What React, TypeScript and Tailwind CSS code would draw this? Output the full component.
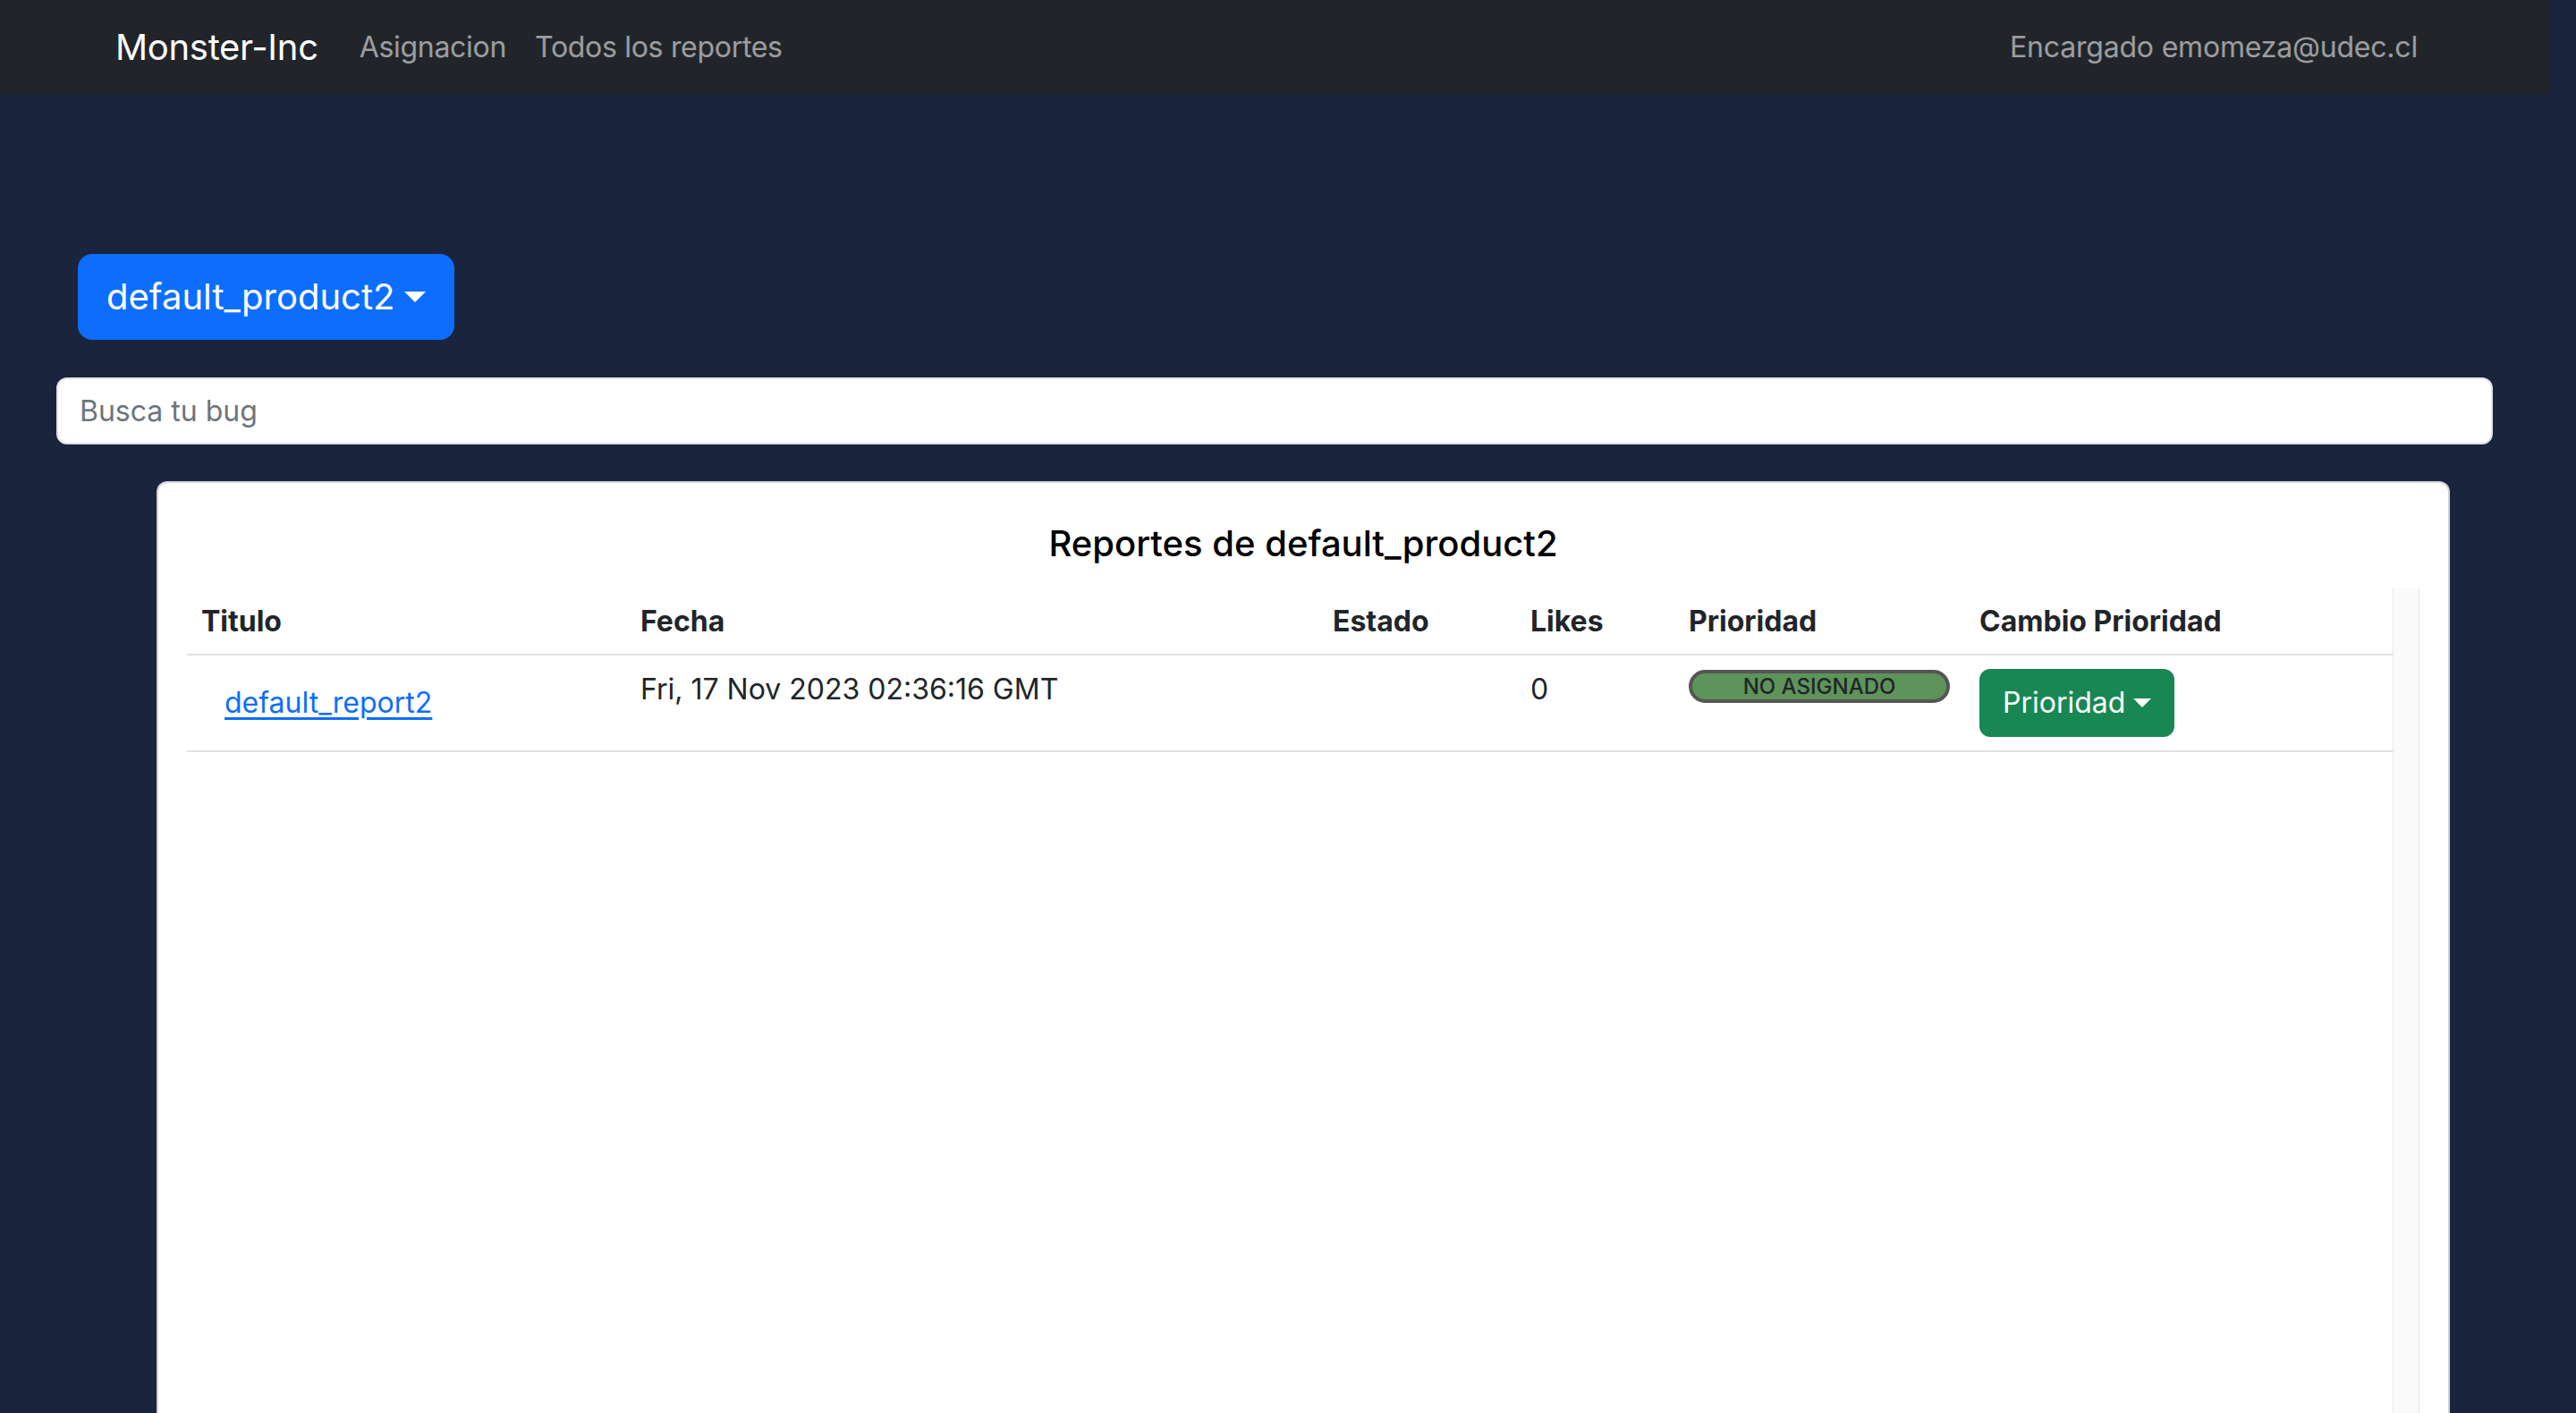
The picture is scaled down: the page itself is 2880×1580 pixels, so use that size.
import React from "react";

const rows = [
    {
        titulo: "default_report2",
        fecha: "Fri, 17 Nov 2023 02:36:16 GMT",
        estado: "",
        likes: 0,
        prioridad: "NO ASIGNADO",
    },
];

function Caret({ size }: { size: "lg" | "md" }) {
    return size === "lg" ? (
        <span className="ml-[11px] inline-block border-x-[12px] border-t-[12px] border-x-transparent border-t-white align-middle" />
    ) : (
        <span className="ml-[9px] inline-block border-x-[10px] border-t-[10px] border-x-transparent border-t-white align-middle" />
    );
}

export default function App() {
    return (
        <div
            className="flex h-[1580px] w-full flex-col overflow-hidden bg-[#1a243d] text-[#212529]"
            style={{ fontFamily: "Inter, 'Noto Sans', sans-serif" }}
        >
            {/* Navbar */}
            <nav className="flex h-[106px] w-[2850px] shrink-0 items-center bg-[#212529] pl-[129px] pr-[147px]">
                <span className="mr-[30px] text-[40px] leading-[60px] tracking-[-0.3px] text-white">Monster-Inc</span>
                <a className="px-[16px] text-[32px] leading-[48px] tracking-[-0.3px] text-white/55">Asignacion</a>
                <a className="px-[16px] text-[32px] leading-[48px] tracking-[-0.3px] text-white/55">Todos los reportes</a>
                <span className="ml-auto text-[32px] leading-[48px] tracking-[-0.2px] text-white/55">Encargado emomeza@udec.cl</span>
            </nav>

            <main className="flex min-h-0 flex-1 flex-col pl-[63px] pr-[93px]">
                {/* Product dropdown */}
                <div className="ml-[24px] mt-[178px]">
                    <button className="flex h-[96px] items-center rounded-[16px] bg-[#0d6efd] px-[32px] text-[40px] leading-[60px] text-white">
                        default_product2
                        <Caret size="lg" />
                    </button>
                </div>

                {/* Search */}
                <input
                    className="mt-[42px] h-[75px] w-full rounded-[12px] border-2 border-[#dee2e6] bg-white px-[24px] text-[32px] text-[#212529] placeholder:text-[#6c757d] outline-none"
                    placeholder="Busca tu bug"
                />

                {/* Reports card */}
                <section className="ml-[112px] mr-[48px] mt-[41px] flex min-h-0 flex-1 flex-col rounded-t-[12px] border-2 border-b-0 border-[#d3d3d3] bg-white px-[32px] pt-[38px]">
                    <h2 className="text-center text-[40px] font-medium leading-[60px] text-black">
                        Reportes de default_product2
                    </h2>

                    <div className="mt-[20px] flex min-h-0 flex-1">
                        <div className="flex-1">
                            <table className="w-full table-fixed border-collapse">
                                <colgroup>
                                    <col className="w-[491px]" />
                                    <col className="w-[774px]" />
                                    <col className="w-[221px]" />
                                    <col className="w-[177px]" />
                                    <col className="w-[325px]" />
                                    <col />
                                </colgroup>
                                <thead>
                                    <tr className="h-[74px] border-b-2 border-[#dee2e6] text-left text-[32px] font-bold">
                                        <th className="px-[16px] align-middle">Titulo</th>
                                        <th className="px-[16px] align-middle">Fecha</th>
                                        <th className="px-[16px] align-middle">Estado</th>
                                        <th className="px-[16px] align-middle">Likes</th>
                                        <th className="px-[16px] align-middle">Prioridad</th>
                                        <th className="px-[16px] align-middle">Cambio Prioridad</th>
                                    </tr>
                                </thead>
                                <tbody>
                                    {rows.map((r) => (
                                        <tr key={r.titulo} className="border-b-2 border-[#dee2e6] text-[32px] leading-[48px]">
                                            <td className="px-[16px] pb-[15px] pt-[15px] align-top">
                                                <a className="inline-block border-2 border-transparent px-[24px] py-[12px] text-[#0d6efd] underline underline-offset-[5px]">
                                                    {r.titulo}
                                                </a>
                                            </td>
                                            <td className="px-[16px] pt-[14px] align-top">{r.fecha}</td>
                                            <td className="px-[16px] pt-[14px] align-top">{r.estado}</td>
                                            <td className="px-[16px] pt-[14px] align-top">{r.likes}</td>
                                            <td className="px-[16px] pt-[16px] align-top">
                                                <span className="flex h-[37px] w-[292px] items-center justify-center rounded-full border-[4px] border-[#555555] bg-[#5e945a] text-[24px] font-medium leading-none text-[#212529]">
                                                    {r.prioridad}
                                                </span>
                                            </td>
                                            <td className="px-[16px] pt-[15px] align-top">
                                                <button className="flex h-[76px] items-center rounded-[12px] bg-[#198754] px-[26px] text-[32px] text-white">
                                                    Prioridad
                                                    <Caret size="md" />
                                                </button>
                                            </td>
                                        </tr>
                                    ))}
                                </tbody>
                            </table>
                        </div>
                        {/* scroll track */}
                        <div className="w-[30px] border-x border-[#e6e6e6] bg-[#fafafa]" />
                    </div>
                </section>
            </main>
        </div>
    );
}
